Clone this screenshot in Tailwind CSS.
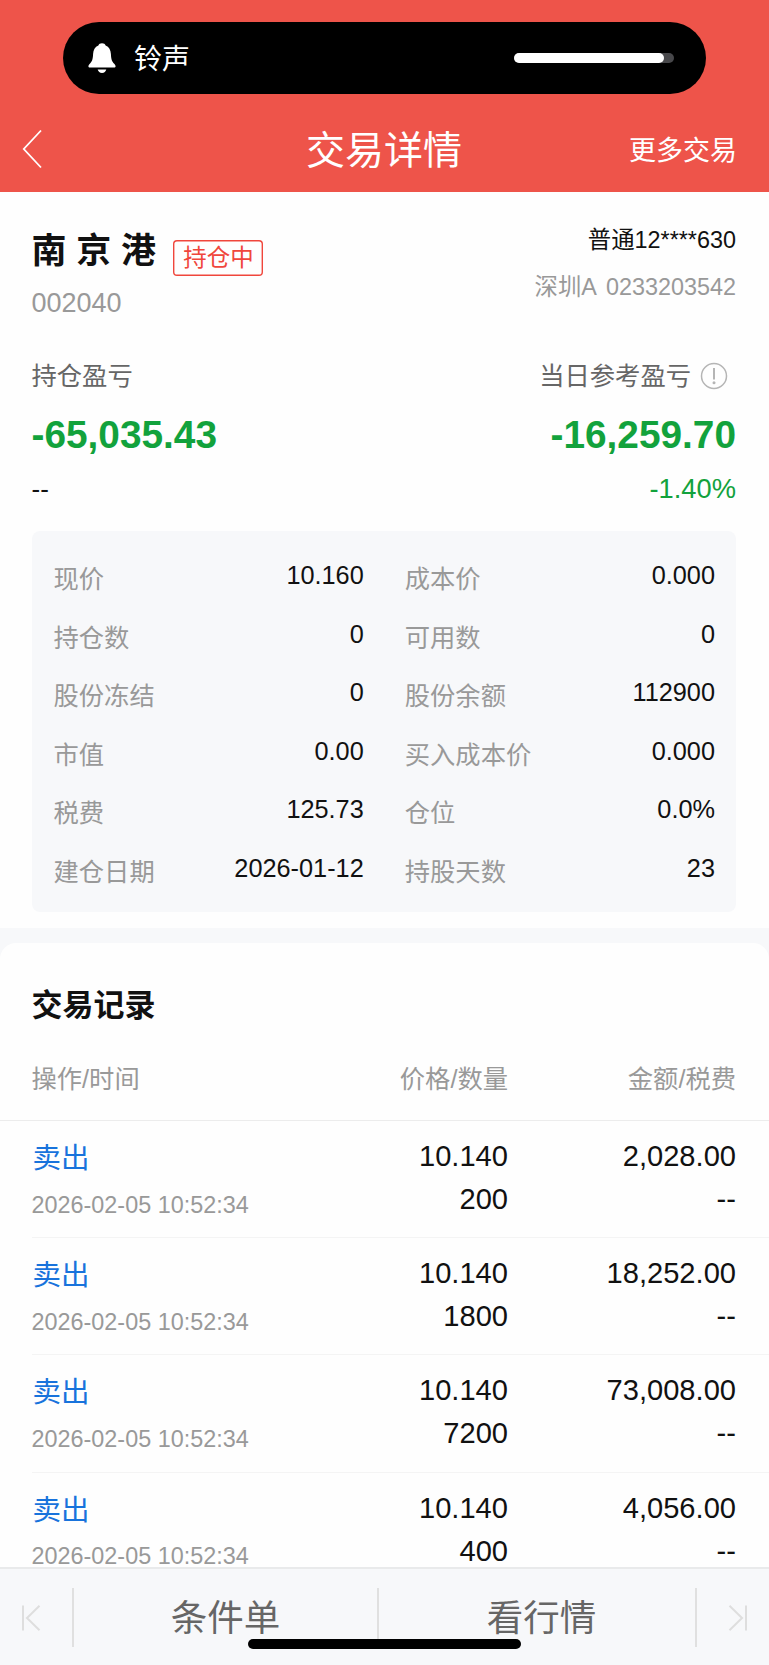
<!DOCTYPE html>
<html lang="zh-CN">
<head>
  <meta charset="UTF-8" />
  <meta name="viewport" content="width=device-width, initial-scale=1.0" />
  <title>交易详情</title>
  <script src="https://cdn.jsdelivr.net/npm/@tailwindcss/browser@4"></script>
</head>
<body class="bg-white">

<div class="flex flex-col w-[769px] h-[1665px] overflow-hidden bg-[#fefefe] text-[#111111] font-['Liberation_Sans','Noto_Sans_CJK_SC',sans-serif]">

  <!-- Header -->
  <header class="shrink-0 h-[192px] bg-[#ee544a] text-white pt-[22px]">
    <div class="flex items-center ml-[62.5px] w-[643px] h-[72px] rounded-full bg-black pl-[25.5px] pr-[32px]">
      <svg class="w-[28px] h-[32px]" viewBox="0 0 28 32" fill="white">
        <path d="M14 1.2c-1.900 0-3.100.9-3.600 2.300C6.900 4.900 5.300 8 5.100 12c-.2 5.500-1.200 7.600-3.300 9.800C.8 22.900.4 23.600.4 24.300c0 .8.6 1.300 1.500 1.300h24.200c.9 0 1.500-.5 1.500-1.300 0-.7-.4-1.400-1.400-2.500-2.100-2.200-3.100-4.300-3.300-9.800-.2-4-1.800-7.100-5.300-8.500C17.100 2.100 15.900 1.200 14 1.200z" />
        <path d="M9.700 27.500h8.600c-.4 2-2.100 3.400-4.300 3.400s-3.900-1.400-4.300-3.400z" />
      </svg>
      <span class="pt-[3px] ml-[18px] text-[28px] leading-[36px]">铃声</span>
      <div class="ml-auto w-[160px] h-[10px] rounded-full bg-[#48484b]">
        <div class="w-[150px] h-[10px] rounded-full bg-white"></div>
      </div>
    </div>

    <div class="grid grid-cols-[1fr_auto_1fr] items-center h-[60px] mt-[23px] pl-[22px] pr-[32px]">
      <svg class="w-[20px] h-[40px]" viewBox="0 0 20 40" fill="none" stroke="white" stroke-width="1.8">
        <path d="M19 1.500L1.800 20 19 38.500" />
      </svg>
      <h1 class="pt-[4px] pl-[9px] text-[39px] leading-[60px]">交易详情</h1>
      <span class="pt-[3px] text-right text-[27px] leading-[60px]">更多交易</span>
    </div>
  </header>

  <!-- Position summary -->
  <section class="shrink-0 h-[736px] pl-[31.5px] pr-[33px]">
    <div class="flex justify-between h-[158px] pt-[25px]">
      <div>
        <div class="flex items-start">
          <h2 class="pt-px text-[35px] leading-[66px] font-bold">南 京 港</h2>
          <span class="mt-[23px] ml-[17.5px] w-[90px] h-[36px] rounded-[4px] shadow-[inset_0_0_0_1.4px_#f0463c] text-center text-[23.5px] leading-[37px] text-[#f0463c]">持仓中</span>
        </div>
        <p class="mt-[3px] text-[27px] leading-[33px] text-[#999999]">002040</p>
      </div>
      <div class="text-right text-[23.4px]">
        <p class="leading-[47px]">普通12****630</p>
        <p class="leading-[47px] text-[#999999]">深圳A<span class="ml-[9px]">0233203542</span></p>
      </div>
    </div>

    <div class="flex justify-between">
      <div>
        <p class="text-[25.3px] leading-[52px] text-[#666666]">持仓盈亏</p>
        <p class="pt-px text-[38.8px] leading-[64px] font-bold text-[#12a23c]">-65,035.43</p>
        <p class="text-[26px] leading-[44px]">--</p>
      </div>
      <div class="text-right">
        <p class="flex justify-end items-center pr-[8px] text-[25.3px] leading-[52px] text-[#666666]">
          当日参考盈亏
          <svg class="ml-[9px] w-[28px] h-[28px]" viewBox="0 0 28 28" fill="none" stroke="#b5b5b5" stroke-width="1.5">
            <circle cx="14" cy="14" r="12.500" />
            <path d="M14 6v11.500" stroke-width="2" />
            <circle cx="14" cy="20.800" r="1.500" fill="#b5b5b5" stroke="none" />
          </svg>
        </p>
        <p class="pt-px text-[38.8px] leading-[64px] font-bold text-[#12a23c]">-16,259.70</p>
        <p class="text-[27.3px] leading-[44px] text-[#12a23c]">-1.40%</p>
      </div>
    </div>

    <div class="grid grid-cols-2 auto-rows-[58.6px] gap-x-[41px] mt-[20px] w-[704.5px] h-[381px] rounded-[8px] bg-[#f7f8fa] pl-[22px] pr-[21px] pt-[15px] text-[25.3px] leading-[58px]">
      <div class="flex justify-between"><span class="pt-[4px] text-[#999999]">现价</span><span>10.160</span></div>
      <div class="flex justify-between"><span class="pt-[4px] text-[#999999]">成本价</span><span>0.000</span></div>
      <div class="flex justify-between"><span class="pt-[4px] text-[#999999]">持仓数</span><span>0</span></div>
      <div class="flex justify-between"><span class="pt-[4px] text-[#999999]">可用数</span><span>0</span></div>
      <div class="flex justify-between"><span class="pt-[4px] text-[#999999]">股份冻结</span><span>0</span></div>
      <div class="flex justify-between"><span class="pt-[4px] text-[#999999]">股份余额</span><span>112900</span></div>
      <div class="flex justify-between"><span class="pt-[4px] text-[#999999]">市值</span><span>0.00</span></div>
      <div class="flex justify-between"><span class="pt-[4px] text-[#999999]">买入成本价</span><span>0.000</span></div>
      <div class="flex justify-between"><span class="pt-[4px] text-[#999999]">税费</span><span>125.73</span></div>
      <div class="flex justify-between"><span class="pt-[4px] text-[#999999]">仓位</span><span>0.0%</span></div>
      <div class="flex justify-between"><span class="pt-[4px] text-[#999999]">建仓日期</span><span>2026-01-12</span></div>
      <div class="flex justify-between"><span class="pt-[4px] text-[#999999]">持股天数</span><span>23</span></div>
    </div>
  </section>

  <!-- Trade records -->
  <section class="flex-1 min-h-0 overflow-hidden bg-[#f7f8fa] pt-[15px]">
    <div class="rounded-t-[16px] bg-[#fefefe] pt-[37px]">
      <h2 class="pl-[31.5px] text-[31px] leading-[52px] font-bold">交易记录</h2>

      <div class="grid grid-cols-[1fr_220px_228px] mt-[7px] h-[82px] border-b border-[#ececec] pl-[31.5px] pr-[33px] text-[25.3px] leading-[80px] text-[#999999]">
        <span>操作/时间</span>
        <span class="text-right">价格/数量</span>
        <span class="text-right">金额/税费</span>
      </div>

      <div class="pl-[31.5px]">
        <div class="grid grid-cols-[1fr_220px_228px] h-[117.2px] border-b border-[#f4f4f4] pt-[14px] pr-[33px] text-[29.1px] leading-[43px]">
          <div>
            <p class="pl-px text-[28.5px] leading-[46px] text-[#1873dc]">卖出</p>
            <p class="text-[23.4px] leading-[48px] text-[#999999]">2026-02-05 10:52:34</p>
          </div>
          <div class="text-right"><p>10.140</p><p>200</p></div>
          <div class="text-right"><p>2,028.00</p><p>--</p></div>
        </div>

        <div class="grid grid-cols-[1fr_220px_228px] h-[117.2px] border-b border-[#f4f4f4] pt-[14px] pr-[33px] text-[29.1px] leading-[43px]">
          <div>
            <p class="pl-px text-[28.5px] leading-[46px] text-[#1873dc]">卖出</p>
            <p class="text-[23.4px] leading-[48px] text-[#999999]">2026-02-05 10:52:34</p>
          </div>
          <div class="text-right"><p>10.140</p><p>1800</p></div>
          <div class="text-right"><p>18,252.00</p><p>--</p></div>
        </div>

        <div class="grid grid-cols-[1fr_220px_228px] h-[117.2px] border-b border-[#f4f4f4] pt-[14px] pr-[33px] text-[29.1px] leading-[43px]">
          <div>
            <p class="pl-px text-[28.5px] leading-[46px] text-[#1873dc]">卖出</p>
            <p class="text-[23.4px] leading-[48px] text-[#999999]">2026-02-05 10:52:34</p>
          </div>
          <div class="text-right"><p>10.140</p><p>7200</p></div>
          <div class="text-right"><p>73,008.00</p><p>--</p></div>
        </div>

        <div class="grid grid-cols-[1fr_220px_228px] h-[94px] pt-[14px] pr-[33px] text-[29.1px] leading-[43px]">
          <div>
            <p class="pl-px text-[28.5px] leading-[46px] text-[#1873dc]">卖出</p>
            <p class="text-[23.4px] leading-[47px] text-[#999999]">2026-02-05 10:52:34</p>
          </div>
          <div class="text-right"><p>10.140</p><p>400</p></div>
          <div class="text-right"><p>4,056.00</p><p>--</p></div>
        </div>
      </div>
    </div>
  </section>

  <!-- Bottom bar -->
  <footer class="relative shrink-0 flex items-start h-[98px] border-t-2 border-[#e9eaeb] bg-[#f7f8fa] pt-[19px] text-[36.5px] leading-[62px] text-[#666666]">
    <div class="flex justify-center items-center w-[72px] h-[59px] pr-[10px]">
      <svg class="w-[20px] h-[28px]" viewBox="0 0 20 28" fill="none" stroke="#dedede" stroke-width="2">
        <path d="M2 1.500v25M18.500 1.800L6 14l12.500 12.200" />
      </svg>
    </div>
    <div class="w-[305px] h-[59px] border-l-2 border-[#e0e0e0] text-center">条件单</div>
    <div class="w-[318px] h-[59px] border-l-2 border-[#e0e0e0] pl-[9px] text-center">看行情</div>
    <div class="flex justify-center items-center w-[74px] h-[59px] border-l-2 border-[#e0e0e0] pl-[9px]">
      <svg class="w-[20px] h-[28px]" viewBox="0 0 20 28" fill="none" stroke="#dedede" stroke-width="2">
        <path d="M18 1.500v25M1.500 1.800L14 14 1.500 26.200" />
      </svg>
    </div>
    <!-- Home indicator -->
    <div class="absolute left-[248px] bottom-[16px] w-[273px] h-[10px] rounded-full bg-black"></div>
  </footer>
</div>

</body>
</html>
